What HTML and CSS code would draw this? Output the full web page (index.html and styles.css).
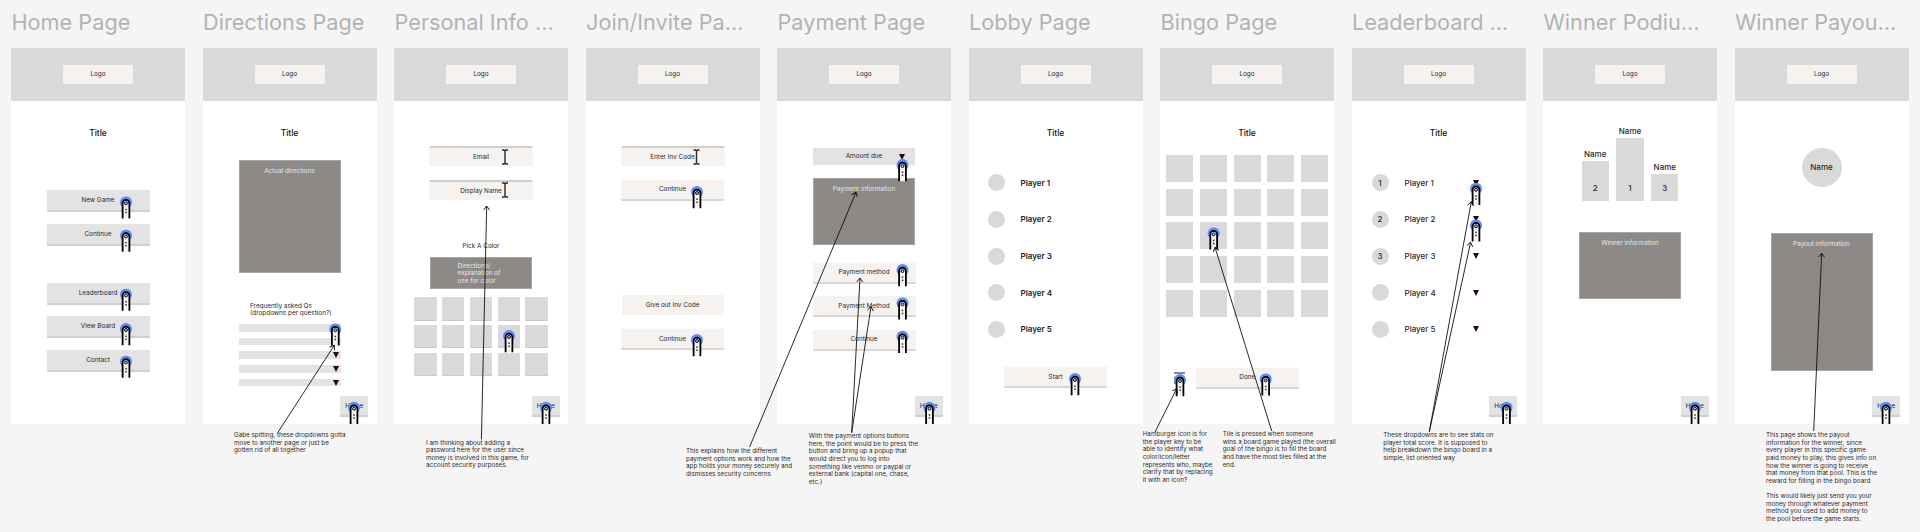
FILE: index.html
```html
<!DOCTYPE html>
<html>
<head>
<meta charset="utf-8">
<title>Bingo App Wireframes</title>
<link rel="stylesheet" href="styles.css">
</head>
<body>
<main class="board">

	<section class="col">
		<h2>Home Page</h2>
		<div class="frame">
			<header class="top"><div class="logo">Logo</div></header>
			<div class="body">
				<div class="title">Title</div>
				<div class="stack home-first">
					<div class="btn">New Game</div>
					<div class="btn">Continue</div>
				</div>
				<div class="stack home-second">
					<div class="btn">Leaderboard</div>
					<div class="btn">View Board</div>
					<div class="btn">Contact</div>
				</div>
			</div>
		</div>
	</section>

	<section class="col">
		<h2>Directions Page</h2>
		<div class="frame">
			<header class="top"><div class="logo">Logo</div></header>
			<div class="body">
				<div class="title">Title</div>
				<div class="panel directions">Actual directions</div>
				<p class="faq">Frequently asked Qs<br>(dropdowns per question?)</p>
				<div class="faq-list">
					<div class="faq-bar"><i class="tri"></i></div>
					<div class="faq-bar"><i class="tri"></i></div>
					<div class="faq-bar"><i class="tri"></i></div>
					<div class="faq-bar"><i class="tri"></i></div>
					<div class="faq-bar"><i class="tri"></i></div>
				</div>
				<div class="home-btn">Home</div>
			</div>
		</div>
	</section>

	<section class="col">
		<h2>Personal Info ...</h2>
		<div class="frame">
			<header class="top"><div class="logo">Logo</div></header>
			<div class="body no-title">
				<div class="input">Email</div>
				<div class="input next">Display Name</div>
				<div class="pick">Pick A Color</div>
				<div class="panel color-help"><span>Directions/<br>explanation of<br>use for color</span></div>
				<div class="colors">
					<i></i><i></i><i></i><i></i><i></i>
					<i></i><i></i><i></i><i></i><i></i>
					<i></i><i></i><i></i><i></i><i></i>
				</div>
				<div class="home-btn">Home</div>
			</div>
		</div>
	</section>

	<section class="col">
		<h2>Join/Invite Pa...</h2>
		<div class="frame">
			<header class="top"><div class="logo">Logo</div></header>
			<div class="body no-title">
				<div class="input">Enter Inv Code</div>
				<div class="btn light next">Continue</div>
				<div class="plain">Give out Inv Code</div>
				<div class="btn light next">Continue</div>
			</div>
		</div>
	</section>

	<section class="col">
		<h2>Payment Page</h2>
		<div class="frame">
			<header class="top"><div class="logo">Logo</div></header>
			<div class="body no-title">
				<div class="amount">Amount due<i class="tri"></i></div>
				<div class="panel pay-info">Payment information</div>
				<div class="stack pay-methods">
					<div class="btn light">Payment method</div>
					<div class="btn light">Payment Method</div>
					<div class="btn light">Continue</div>
				</div>
				<div class="home-btn">Home</div>
			</div>
		</div>
	</section>

	<section class="col">
		<h2>Lobby Page</h2>
		<div class="frame">
			<header class="top"><div class="logo">Logo</div></header>
			<div class="body">
				<div class="title">Title</div>
				<ul class="players">
					<li><i class="dot"></i>Player 1</li>
					<li><i class="dot"></i>Player 2</li>
					<li><i class="dot"></i>Player 3</li>
					<li><i class="dot"></i>Player 4</li>
					<li><i class="dot"></i>Player 5</li>
				</ul>
				<div class="btn light start">Start</div>
			</div>
		</div>
	</section>

	<section class="col">
		<h2>Bingo Page</h2>
		<div class="frame">
			<header class="top"><div class="logo">Logo</div></header>
			<div class="body">
				<div class="title">Title</div>
				<div class="bingo">
					<i></i><i></i><i></i><i></i><i></i>
					<i></i><i></i><i></i><i></i><i></i>
					<i></i><i></i><i></i><i></i><i></i>
					<i></i><i></i><i></i><i></i><i></i>
					<i></i><i></i><i></i><i></i><i></i>
				</div>
				<div class="bingo-foot">
					<div class="burger"><i></i><i></i><i></i></div>
					<div class="btn light">Done</div>
				</div>
			</div>
		</div>
	</section>

	<section class="col">
		<h2>Leaderboard ...</h2>
		<div class="frame">
			<header class="top"><div class="logo">Logo</div></header>
			<div class="body">
				<div class="title">Title</div>
				<ul class="ranks">
					<li><i class="dot">1</i><span>Player 1</span><i class="tri"></i></li>
					<li><i class="dot">2</i><span>Player 2</span><i class="tri"></i></li>
					<li><i class="dot">3</i><span>Player 3</span><i class="tri"></i></li>
					<li><i class="dot"></i><span>Player 4</span><i class="tri"></i></li>
					<li><i class="dot"></i><span>Player 5</span><i class="tri"></i></li>
				</ul>
				<div class="home-btn">Home</div>
			</div>
		</div>
	</section>

	<section class="col">
		<h2>Winner Podiu...</h2>
		<div class="frame">
			<header class="top"><div class="logo">Logo</div></header>
			<div class="body">
				<div class="podium">
					<div class="place"><span>Name</span><div class="step second">2</div></div>
					<div class="place"><span>Name</span><div class="step first">1</div></div>
					<div class="place"><span>Name</span><div class="step third">3</div></div>
				</div>
				<div class="panel winner-info">Winner information</div>
				<div class="home-btn">Home</div>
			</div>
		</div>
	</section>

	<section class="col">
		<h2>Winner Payou...</h2>
		<div class="frame">
			<header class="top"><div class="logo">Logo</div></header>
			<div class="body no-title">
				<div class="avatar">Name</div>
				<div class="panel payout-info">Payout information</div>
				<div class="home-btn">Home</div>
			</div>
		</div>
	</section>
</main>

<!-- sticky notes under the frames -->
<p class="note note-faq">Gabe spitting, these dropdowns gotta<br>move to another page or just be<br>gotten rid of all together</p>
<p class="note note-personal">I am thinking about adding a<br>password here for the user since<br>money is involved in this game, for<br>account security purposes.</p>
<p class="note note-payment">This explains how the different<br>payment options work and how the<br>app holds your money securely and<br>dismisses security concerns</p>
<p class="note note-method">With the payment options buttons<br>here, the point would be to press the<br>button and bring up a popup that<br>would direct you to log into<br>something like venmo or paypal or<br>external bank (capital one, chase,<br>etc.)</p>
<p class="note note-burger">Hamburger icon is for<br>the player key to be<br>able to identify what<br>color/icon/letter<br>represents who, maybe<br>clarify that by replacing<br>it with an icon?</p>
<p class="note note-tile">Tile is pressed when someone<br>wins a board game played (the overall<br>goal of the bingo is to fill the board<br>and have the most tiles filled at the<br>end.</p>
<p class="note note-ranks">These dropdowns are to see stats on<br>player total score. It is supposed to<br>help breakdown the bingo board in a<br>simple, list oriented way</p>
<p class="note note-payout">This page shows the payout<br>information for the winner, since<br>every player in this specific game<br>paid money to play, this gives info on<br>how the winner is going to receive<br>that money from that pool. This is the<br>reward for filling in the bingo board<br><br>This would likely just send you your<br>money through whatever payment<br>method you used to add money to<br>the pool before the game starts.</p>

<!-- tap cursors, text cursors and note arrows drawn over everything, page coords -->
<svg class="marks" width="1920" height="532" viewBox="0 0 1920 532">
	<defs>
		<symbol id="tap" width="14" height="24">
			<circle cx="7" cy="6" r="6" fill="#5a8cff"/>
			<path d="M3.6 22.2V7a3.4 3.4 0 0 1 6.8 0V22.2" fill="#f4f4f4" stroke="#000" stroke-width="1.8"/>
			<circle cx="7" cy="7" r="1.5" fill="#bbb" stroke="#111"/>
			<path d="M7 12.5v1.5M7 15.5v1.5" stroke="#333" stroke-width="1.5"/>
		</symbol>
		<symbol id="beam" width="9" height="16">
			<path d="M1.5 1h2l1 1 1-1h2M4.5 2v12M1.5 15h2l1-1 1 1h2" fill="none" stroke="#2b2b2b" stroke-width="1.4"/>
		</symbol>
		<marker id="head" markerWidth="8" markerHeight="8" refX="6" refY="4" orient="auto" markerUnits="userSpaceOnUse">
			<path d="M2 1l4 3-4 3" fill="none" stroke="#111" stroke-width="0.9"/>
		</marker>
	</defs>

	<g>
		<use href="#tap" x="119" y="196.3"/>
		<use href="#tap" x="119" y="229.5"/>
		<use href="#tap" x="119" y="288.5"/>
		<use href="#tap" x="119" y="323"/>
		<use href="#tap" x="119" y="355.5"/>
		<use href="#tap" x="328.3" y="323.3"/>
		<use href="#tap" x="347" y="401.7"/>
		<use href="#tap" x="502" y="330"/>
		<use href="#tap" x="539" y="401.7"/>
		<use href="#tap" x="690" y="186"/>
		<use href="#tap" x="690" y="334"/>
		<use href="#tap" x="895.5" y="159"/>
		<use href="#tap" x="895.5" y="264"/>
		<use href="#tap" x="895.5" y="297.3"/>
		<use href="#tap" x="895.5" y="330.7"/>
		<use href="#tap" x="922.5" y="401.7"/>
		<use href="#tap" x="1068" y="373"/>
		<use href="#tap" x="1206.7" y="227.3"/>
		<use href="#tap" x="1173" y="374"/>
		<use href="#tap" x="1258.7" y="373.3"/>
		<use href="#tap" x="1469" y="182.7"/>
		<use href="#tap" x="1469" y="219.3"/>
		<use href="#tap" x="1499.5" y="401.7"/>
		<use href="#tap" x="1688" y="401.7"/>
		<use href="#tap" x="1879" y="401.7"/>
	</g>

	<g>
		<use href="#beam" x="500.5" y="149"/>
		<use href="#beam" x="500.5" y="182"/>
		<use href="#beam" x="692" y="149"/>
	</g>

	<g fill="none" stroke="#111" stroke-width="0.9" marker-end="url(#head)">
		<line x1="277.7" y1="432.7" x2="334.3" y2="345.3"/>
		<line x1="481.4" y1="439.3" x2="486.7" y2="206"/>
		<line x1="749.6" y1="447" x2="856" y2="192.3"/>
		<line x1="851.7" y1="432.7" x2="860" y2="278"/>
		<line x1="851.7" y1="432.7" x2="871" y2="306.7"/>
		<line x1="1155" y1="432" x2="1176.7" y2="388.7"/>
		<line x1="1271.7" y1="431" x2="1215" y2="247.3"/>
		<line x1="1429.3" y1="431.7" x2="1471.3" y2="201.7"/>
		<line x1="1429.3" y1="431.7" x2="1470.6" y2="242.3"/>
		<line x1="1813.7" y1="431" x2="1821.7" y2="253.3"/>
	</g>
</svg>
</body>
</html>
```

FILE: styles.css
```css
*{
	box-sizing: border-box;
}
html, body{
	margin: 0;
	height: 532px;
	overflow: hidden;
}
body{
	position: relative;
	background-color: #f5f5f5;
	font-family: Inter, 'Liberation Sans', sans-serif;
	font-size: 6.4px;
	color: #2a2a2a;
}
i{
	font-style: normal;
}
p, ul{
	margin: 0;
	padding: 0;
	list-style: none;
}

/* canvas */
.board{
	display: flex;
	gap: 17.5px;
	padding-left: 11px;
}
.col{
	flex: 0 0 174px;
	width: 174px;
}
.col h2{
	margin: 0;
	height: 48px;
	padding-left: 0.5px;
	font-size: 21.7px;
	line-height: 45px;
	font-weight: 400;
	color: #b3b3b3;
	white-space: nowrap;
}
.frame{
	height: 376px;
	background-color: #fff;
	display: flex;
	flex-direction: column;
}
.top{
	height: 53px;
	background-color: #d9d9d9;
	display: flex;
	align-items: center;
	justify-content: center;
}
.logo{
	width: 70px;
	height: 19.4px;
	background-color: #f5f2f0;
	display: flex;
	align-items: center;
	justify-content: center;
}
.body{
	flex: 1;
	min-height: 0;
	padding: 26px 0 7px;
	display: flex;
	flex-direction: column;
	align-items: center;
}
.body.no-title{
	padding-top: 45px;
}
.title{
	font-size: 8.5px;
	line-height: 12px;
	font-weight: 500;
	color: #111;
}

/* shared widgets */
.stack{
	display: flex;
	flex-direction: column;
	gap: 11.7px;
}
.btn{
	width: 103px;
	height: 22px;
	background-color: #e3e3e3;
	border-bottom: 2px solid #d0d0d0;
	border-radius: 1px;
	box-shadow: 0 0 1px rgba(0, 0, 0, .1);
	display: flex;
	align-items: center;
	justify-content: center;
}
.btn.light{
	height: 21px;
	background-color: #f5f2f0;
	border-bottom-color: #d8d8d8;
}
.input{
	width: 102px;
	height: 19.7px;
	background-color: #f5f2f0;
	border-top: 2px solid #cdcdcd;
	box-shadow: 0.5px 0 0 #e8e8e8, -0.5px 0 0 #e8e8e8;
	display: flex;
	align-items: center;
	justify-content: center;
}
.next{
	margin-top: 14.3px;
}
.panel{
	width: 102px;
	background-color: #8d8987;
	border: 0.5px solid #a8a6a4;
	color: #e6e6e6;
	text-align: center;
	line-height: 8px;
	padding-top: 6px;
}
.home-btn{
	margin-top: auto;
	align-self: flex-end;
	margin-right: 8.5px;
	width: 27.7px;
	height: 21px;
	background-color: #e3e3e3;
	border-bottom: 2px solid #d0d0d0;
	border-radius: 1px;
	box-shadow: 0 0 1px rgba(0, 0, 0, .1);
	display: flex;
	align-items: center;
	justify-content: center;
}
.tri{
	width: 0;
	height: 0;
	border-left: 3.4px solid transparent;
	border-right: 3.4px solid transparent;
	border-top: 6px solid #2a0a0a;
}
.dot{
	flex: none;
	width: 17px;
	height: 17px;
	border-radius: 50%;
	background-color: #d9d9d9;
	display: flex;
	align-items: center;
	justify-content: center;
}

/* home */
.home-first{
	margin-top: 51px;
}
.home-second{
	margin-top: 37px;
}

/* directions */
.directions{
	margin-top: 21.3px;
	height: 112.4px;
}
.faq{
	align-self: flex-start;
	margin: 30px 0 0 47.5px;
	line-height: 7.6px;
}
.faq-list{
	margin-top: 6.2px;
	display: flex;
	flex-direction: column;
	gap: 6.2px;
}
.faq-bar{
	width: 102px;
	height: 7.5px;
	background-color: #e3e3e3;
	display: flex;
	align-items: center;
	justify-content: flex-end;
	padding-right: 1.7px;
}

/* personal info */
.pick{
	margin-top: 41.6px;
	line-height: 10px;
}
.color-help{
	margin-top: 6px;
	height: 31.3px;
	text-align: left;
	line-height: 7.6px;
	padding: 4.5px 0 0 26.6px;
}
.colors{
	margin-top: 8.4px;
	display: grid;
	grid-template-columns: repeat(5, 22.6px);
	grid-auto-rows: 23.7px;
	gap: 4.1px 5.3px;
}
.colors i{
	background-color: #d9d9d9;
	border-bottom: 1.5px solid #c9c9c9;
	border-radius: 1px;
}

/* join */
.plain{
	margin-top: 94.3px;
	width: 102px;
	height: 19.4px;
	background-color: #f5f2f0;
	display: flex;
	align-items: center;
	justify-content: center;
}
.plain + .btn{
	margin-top: 14.6px;
}

/* payment */
.amount{
	margin-top: 1.7px;
	position: relative;
	width: 102px;
	height: 17px;
	background-color: #e3e3e3;
	display: flex;
	align-items: center;
	justify-content: center;
}
.amount .tri{
	position: absolute;
	right: 9.6px;
	top: 6.3px;
}
.pay-info{
	margin-top: 13px;
	height: 67.3px;
}
.pay-methods{
	margin-top: 18px;
	gap: 12.4px;
}

/* lobby */
.players{
	margin-top: 35.2px;
	align-self: stretch;
	padding-left: 19px;
	display: flex;
	flex-direction: column;
	gap: 19.7px;
}
.players li{
	display: flex;
	align-items: center;
	gap: 16px;
	font-size: 8px;
	font-weight: 600;
	color: #1c1c1c;
}
.start{
	margin-top: 29.5px;
}

/* bingo */
.bingo{
	margin-top: 16px;
	display: grid;
	grid-template-columns: repeat(5, 27px);
	grid-auto-rows: 27px;
	gap: 6.7px;
}
.bingo i{
	background-color: #d9d9d9;
}
.bingo-foot{
	margin-top: 51px;
	align-self: stretch;
	padding-left: 14px;
	display: flex;
	align-items: center;
	gap: 10.8px;
}
.burger{
	width: 11px;
	display: flex;
	flex-direction: column;
	gap: 3px;
}
.burger i{
	height: 2px;
	background-color: #8a8a8a;
}

/* leaderboard */
.ranks{
	margin-top: 35.2px;
	align-self: stretch;
	padding-left: 20px;
	display: flex;
	flex-direction: column;
	gap: 19.7px;
}
.ranks li{
	display: grid;
	grid-template-columns: 17px 52px 7px;
	column-gap: 16px;
	align-items: center;
	font-size: 8px;
	font-weight: 500;
}

/* podium */
.podium{
	margin-top: -1px;
	display: flex;
	align-items: flex-end;
	gap: 7.5px;
}
.place{
	width: 27.3px;
	display: flex;
	flex-direction: column;
	align-items: center;
	gap: 2.2px;
	font-size: 8px;
	font-weight: 500;
	line-height: 10px;
}
.step{
	width: 100%;
	background-color: #d9d9d9;
	display: flex;
	align-items: flex-end;
	justify-content: center;
	padding-bottom: 8px;
}
.step.first{
	height: 63px;
}
.step.second{
	height: 40px;
}
.step.third{
	height: 27px;
}
.winner-info{
	margin-top: 31.3px;
	height: 67px;
}

/* payout */
.avatar{
	margin-top: 1.7px;
	width: 40px;
	height: 39px;
	border-radius: 50%;
	background-color: #d9d9d9;
	display: flex;
	align-items: center;
	justify-content: center;
	font-size: 8px;
	font-weight: 500;
}
.payout-info{
	margin-top: 46.6px;
	height: 138px;
}

/* notes live on the canvas, so they are placed by hand */
.note{
	position: absolute;
	font-size: 6.3px;
	line-height: 7.6px;
	color: #2a2a2a;
	white-space: nowrap;
}
.note-faq{ left: 234px; top: 432.2px; }
.note-personal{ left: 426px; top: 439.5px; }
.note-payment{ left: 686px; top: 448.2px; }
.note-method{ left: 808.8px; top: 433.2px; }
.note-burger{ left: 1142.7px; top: 431.2px; }
.note-tile{ left: 1222.7px; top: 431.2px; }
.note-ranks{ left: 1383.3px; top: 432.2px; }
.note-payout{ left: 1766px; top: 432.2px; }

.marks{
	position: absolute;
	left: 0;
	top: 0;
	pointer-events: none;
}
```
